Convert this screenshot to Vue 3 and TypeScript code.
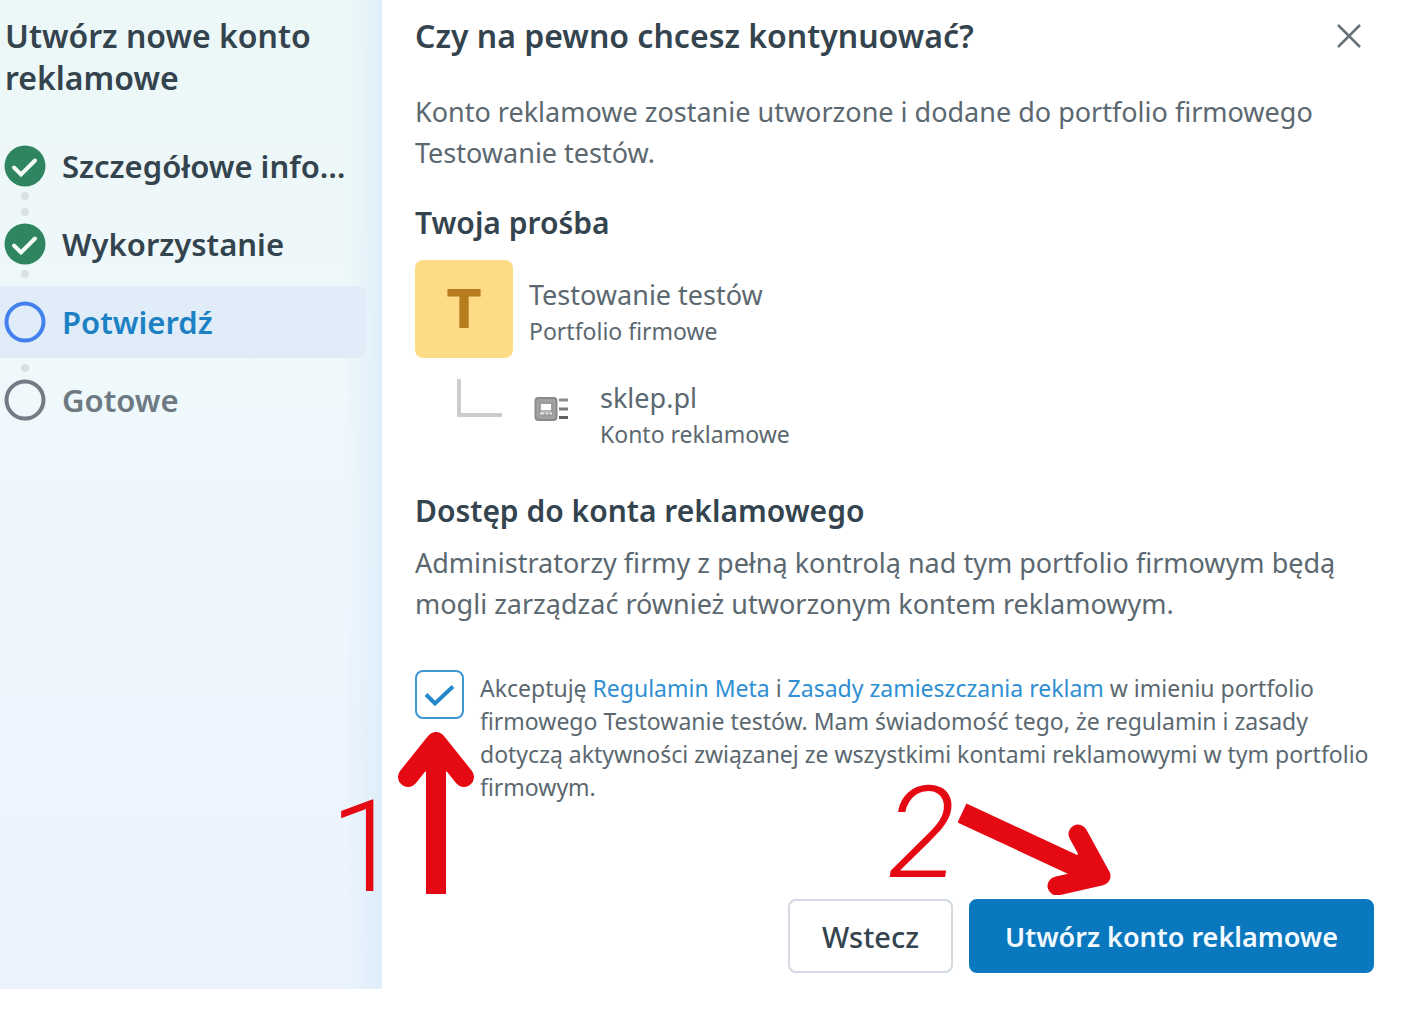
<script setup lang="ts">
interface Step {
  label: string
  state: 'done' | 'current' | 'pending'
}

const steps: Step[] = [
  { label: 'Szczegółowe info…', state: 'done' },
  { label: 'Wykorzystanie', state: 'done' },
  { label: 'Potwierdź', state: 'current' },
  { label: 'Gotowe', state: 'pending' },
]
</script>

<template>
  <div class="dialog" role="dialog" aria-labelledby="dialog-title">
    <aside class="sidebar">
      <h2 class="title large">Utwórz nowe konto reklamowe</h2>
      <ol class="steps">
        <li v-for="step in steps" :key="step.label" class="step" :class="step.state">
          <svg class="marker" viewBox="0 0 42 42" aria-hidden="true">
            <template v-if="step.state === 'done'">
              <circle cx="21" cy="21" r="20.5" fill="#2f855f" />
              <path d="M10 22.500l7 7L31 15.500" fill="none" stroke="#f3fbf8" stroke-width="4" stroke-linecap="round" />
            </template>
            <circle v-else class="ring" cx="21" cy="21" r="18.500" />
          </svg>
          <span class="label">{{ step.label }}</span>
        </li>
      </ol>
    </aside>

    <main class="content">
      <header class="header">
        <h1 id="dialog-title" class="title large">Czy na pewno chcesz kontynuować?</h1>
        <button class="close" type="button" aria-label="Zamknij">
          <svg viewBox="0 0 26 26" aria-hidden="true">
            <path d="M2 2l22 22M24 2L2 24" fill="none" stroke="#65727a" stroke-width="2.500" />
          </svg>
        </button>
      </header>

      <p class="lead">
        Konto reklamowe zostanie utworzone i dodane do portfolio firmowego<br />Testowanie testów.
      </p>

      <section class="request">
        <h2 class="title">Twoja prośba</h2>
        <div class="portfolio">
          <span class="avatar" aria-hidden="true">T</span>
          <div class="entity">
            <div class="name">Testowanie testów</div>
            <div class="kind">Portfolio firmowe</div>
          </div>
        </div>
        <div class="account">
          <span class="branch"></span>
          <svg class="ad-icon" viewBox="0 0 34 26" aria-hidden="true">
            <rect x="1.500" y="2" width="21" height="22" rx="3" fill="#a2a2a2" stroke="#8a8a8a" stroke-width="2" />
            <rect x="6" y="7" width="12" height="12" fill="#b4b4b4" stroke="#8e8e8e" stroke-width="1" />
            <rect x="7" y="8" width="10" height="6" fill="#ffffff" />
            <path d="M6 17.500h4M12 17.500h2M16 17.500h2" stroke="#e4e4e4" stroke-width="2" />
            <path d="M25 4h9" stroke="#8c8c8c" stroke-width="3" />
            <path d="M25 13h9" stroke="#7c7c7c" stroke-width="3" />
            <path d="M25 21.500h9" stroke="#606060" stroke-width="3" />
          </svg>
          <div>
            <div class="name">sklep.pl</div>
            <div class="kind">Konto reklamowe</div>
          </div>
        </div>
      </section>

      <section class="access">
        <h2 class="title">Dostęp do konta reklamowego</h2>
        <p class="lead">
          Administratorzy firmy z pełną kontrolą nad tym portfolio firmowym będą<br />mogli zarządzać również
          utworzonym kontem reklamowym.
        </p>
      </section>

      <div class="consent">
        <input id="consent" class="checkbox" type="checkbox" checked />
        <label for="consent" class="terms">
          Akceptuję <a href="#terms">Regulamin Meta</a> i <a href="#ads">Zasady zamieszczania reklam</a> w imieniu
          portfolio<br />firmowego Testowanie testów. Mam świadomość tego, że regulamin i zasady<br />dotyczą
          aktywności związanej ze wszystkimi kontami reklamowymi w tym portfolio<br />firmowym.
        </label>
        <span class="number first">1</span>
        <svg class="arrow up" viewBox="0 0 76 164" aria-hidden="true">
          <path d="M38 163V12" stroke-width="20" />
          <path d="M10 46L38 11L66 46" stroke-width="20" stroke-linejoin="round" stroke-linecap="round" />
          <path d="M38 14L24 40H52z" class="solid" />
        </svg>
      </div>

      <footer class="footer">
        <span class="number second">2</span>
        <svg class="arrow down" viewBox="0 0 154 92" aria-hidden="true">
          <path d="M4 10L118 63" stroke-width="21" />
          <path d="M120 31L143 73L99 83" stroke-width="19" stroke-linejoin="round" stroke-linecap="round" />
          <path d="M122 46L140 72L112 74z" class="solid" />
        </svg>
        <button class="button back" type="button">Wstecz</button>
        <button class="button create" type="button">Utwórz konto reklamowe</button>
      </footer>
    </main>
  </div>
</template>

<style>
body {
  margin: 0;
  background: #ffffff;
}
</style>

<style scoped>
.dialog {
  display: flex;
  font-family: 'Noto Sans', 'Open Sans', sans-serif;
  color: #5b6870;
}

.sidebar {
  box-sizing: border-box;
  flex: 0 0 382px;
  min-width: 0;
  padding-top: 15px;
  background:
    linear-gradient(90deg, rgba(218, 237, 249, 0) 346px, rgba(218, 237, 249, 0.8) 382px),
    linear-gradient(180deg, #ecf7f7 0%, #eff8fb 40%, #edf5fd 65%, #ebf3fd 100%);
}

.title {
  margin: 0;
  font-size: 30px;
  font-weight: 600;
  line-height: 42px;
  color: #34444e;
}

.title.large {
  font-size: 32px;
}

.sidebar .title {
  padding: 0 32px 0 5px;
}

.steps {
  display: flex;
  flex-direction: column;
  gap: 6px;
  margin: 31px 16px 0 0;
  padding: 0;
  list-style: none;
}

.step {
  position: relative;
  display: flex;
  align-items: center;
  gap: 16px;
  height: 72px;
  padding: 0 8px 0 4px;
  border-radius: 0 8px 8px 0;
  font-size: 31px;
  font-weight: 600;
  color: #34444e;
}

.step::before,
.step.done:first-child::after {
  content: '';
  position: absolute;
  left: 21px;
  top: 78px;
  width: 8px;
  height: 8px;
  border-radius: 50%;
  background: #d9e1e4;
}

.step.done::before {
  top: 62px;
}

.step.pending::before {
  display: none;
}

.step.current {
  background: #e0ecf7;
  color: #1c81c4;
}

.step.pending {
  color: #6d7a82;
}

.marker {
  flex: none;
  width: 42px;
  height: 42px;
}

.ring {
  fill: none;
  stroke: #737c86;
  stroke-width: 4;
}

.current .ring {
  stroke: #4380ee;
}

.label {
  overflow: hidden;
  text-overflow: ellipsis;
  white-space: nowrap;
}

.content {
  flex: 1;
  min-width: 0;
  padding: 15px 34px 16px 33px;
}

.header {
  display: flex;
  align-items: center;
  justify-content: space-between;
}

.close {
  display: flex;
  padding: 0;
  margin-right: 12px;
  border: 0;
  background: none;
}

.close svg {
  width: 26px;
  height: 26px;
}

.lead {
  margin: 0;
  font-size: 27px;
  line-height: 41px;
  white-space: nowrap;
}

.header + .lead {
  margin-top: 34px;
}

.request {
  margin-top: 29px;
}

.portfolio {
  display: flex;
  align-items: center;
  gap: 16px;
  margin-top: 16px;
}

.avatar {
  width: 98px;
  height: 98px;
  border-radius: 8px;
  background: #fedb87;
  color: #b67b1c;
  font-family: Inter, sans-serif;
  font-size: 54px;
  font-weight: 800;
  line-height: 98px;
  text-align: center;
}

.entity {
  padding-top: 7px;
}

.name {
  font-size: 27px;
  line-height: 36px;
}

.kind {
  font-size: 23px;
  line-height: 36px;
}

.account {
  display: flex;
  align-items: center;
  margin: 21px 0 0 42px;
}

.branch {
  width: 41px;
  height: 34px;
  margin-bottom: 36px;
  border: solid #cccccc;
  border-width: 0 0 4px 4px;
}

.ad-icon {
  width: 34px;
  height: 26px;
  margin: 0 32px 14px 32px;
}

.access {
  margin-top: 37px;
}

.access .lead {
  margin-top: 10px;
}

.consent {
  position: relative;
  display: flex;
  align-items: flex-start;
  gap: 16px;
  margin-top: 46px;
}

.checkbox {
  appearance: none;
  box-sizing: border-box;
  flex: none;
  width: 49px;
  height: 49px;
  margin: 0;
  border: 2px solid #3d97d3;
  border-radius: 8px;
  background: #ffffff;
}

.checkbox:checked {
  background: #ffffff
    url("data:image/svg+xml,%3Csvg xmlns='http://www.w3.org/2000/svg' viewBox='0 0 45 45'%3E%3Cpath d='M9 22.500l9 9L36 14.500' fill='none' stroke='%232488cb' stroke-width='4'/%3E%3C/svg%3E")
    center / 45px 45px no-repeat;
}

.terms {
  padding-top: 2px;
  font-size: 23px;
  line-height: 33px;
  white-space: nowrap;
}

.terms a {
  color: #2f8fd2;
  text-decoration: none;
}

.number {
  position: absolute;
  font-family: Roboto, sans-serif;
  font-size: 128px;
  font-weight: 300;
  line-height: 128px;
  color: #e50914;
}

.number.first {
  left: -85px;
  top: 113px;
}

.arrow {
  position: absolute;
  fill: none;
  stroke: #e50914;
}

.arrow .solid {
  fill: #e50914;
}

.arrow.up {
  left: -17px;
  top: 61px;
  width: 76px;
  height: 164px;
}

.footer {
  position: relative;
  display: flex;
  justify-content: flex-end;
  gap: 16px;
  margin-top: 95px;
}

.number.second {
  right: 418px;
  bottom: 76px;
  font-style: italic;
}

.arrow.down {
  right: 262px;
  bottom: 78px;
  width: 154px;
  height: 92px;
}

.button {
  box-sizing: border-box;
  height: 74px;
  padding: 0 32px;
  border: 2px solid #d3d9e1;
  border-radius: 8px;
  background: #ffffff;
  color: #34444e;
  font-family: inherit;
  font-size: 27px;
  font-weight: 600;
}

.button.back {
  font-size: 29px;
  font-weight: 500;
}

.button.create {
  min-width: 405px;
  border-color: #0a78be;
  background: #0a78be;
  color: #f3faff;
}
</style>
